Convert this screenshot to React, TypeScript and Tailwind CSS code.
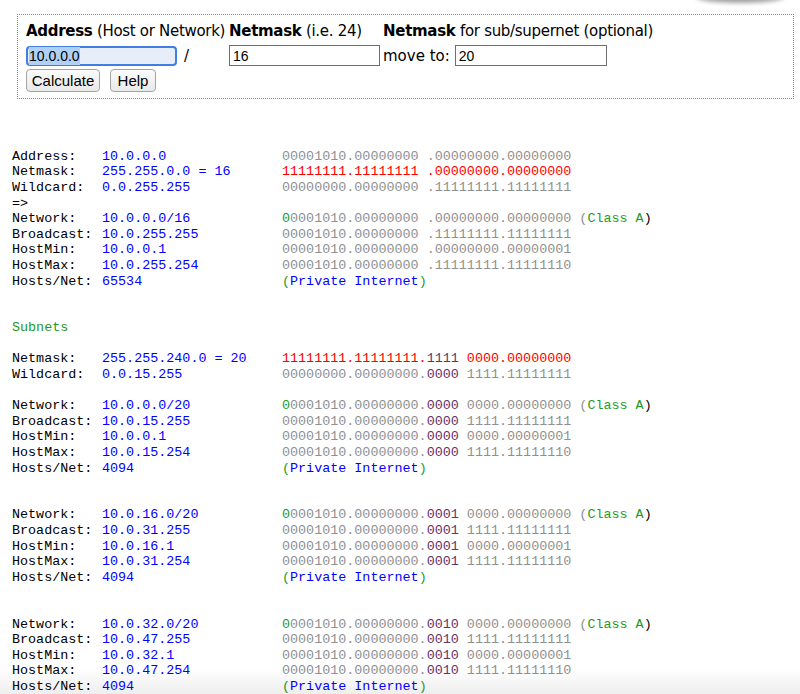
type Seg = [string, string];

const K = "#000000";
const B = "#0000ff";
const G = "#909090";
const R = "#ff0000";
const GR = "#1e9a1e";
const P = "#663366";

interface Row {
  label?: string;
  value?: Seg[];
  bin?: Seg[];
}

const classA: Seg[] = [[" (", G], ["Class A", GR], [")", K]];
const priv: Seg[] = [["(", GR], ["Private Internet", B], [")", GR]];

const subnet = (net: string, bc: string, min: string, max: string, bits: string): Row[] => [
  { label: "Network:", value: [[net, B]], bin: [["0", GR], ["0001010.00000000.", G], [bits, P], [" 0000.00000000", G], ...classA] },
  { label: "Broadcast:", value: [[bc, B]], bin: [["00001010.00000000.", G], [bits, P], [" 1111.11111111", G]] },
  { label: "HostMin:", value: [[min, B]], bin: [["00001010.00000000.", G], [bits, P], [" 0000.00000001", G]] },
  { label: "HostMax:", value: [[max, B]], bin: [["00001010.00000000.", G], [bits, P], [" 1111.11111110", G]] },
  { label: "Hosts/Net:", value: [["4094", B]], bin: priv },
];

const rows: Row[] = [
  { label: "Address:", value: [["10.0.0.0", B]], bin: [["00001010.00000000 .00000000.00000000", G]] },
  { label: "Netmask:", value: [["255.255.0.0 = 16", B]], bin: [["11111111.11111111 .00000000.00000000", R]] },
  { label: "Wildcard:", value: [["0.0.255.255", B]], bin: [["00000000.00000000 .11111111.11111111", G]] },
  { label: "=>" },
  { label: "Network:", value: [["10.0.0.0/16", B]], bin: [["0", GR], ["0001010.00000000 .00000000.00000000", G], ...classA] },
  { label: "Broadcast:", value: [["10.0.255.255", B]], bin: [["00001010.00000000 .11111111.11111111", G]] },
  { label: "HostMin:", value: [["10.0.0.1", B]], bin: [["00001010.00000000 .00000000.00000001", G]] },
  { label: "HostMax:", value: [["10.0.255.254", B]], bin: [["00001010.00000000 .11111111.11111110", G]] },
  { label: "Hosts/Net:", value: [["65534", B]], bin: priv },
  {},
  {},
];

const subnetRows: Row[] = [
  {},
  { label: "Netmask:", value: [["255.255.240.0 = 20", B]], bin: [["11111111.11111111.", R], ["1111", P], [" 0000.00000000", R]] },
  { label: "Wildcard:", value: [["0.0.15.255", B]], bin: [["00000000.00000000.", G], ["0000", P], [" 1111.11111111", G]] },
  {},
  ...subnet("10.0.0.0/20", "10.0.15.255", "10.0.0.1", "10.0.15.254", "0000"),
  {},
  {},
  ...subnet("10.0.16.0/20", "10.0.31.255", "10.0.16.1", "10.0.31.254", "0001"),
  {},
  {},
  ...subnet("10.0.32.0/20", "10.0.47.255", "10.0.32.1", "10.0.47.254", "0010"),
];

const Segs = ({ segs }: { segs?: Seg[] }) => (
  <>
    {segs?.map(([t, c], i) => (
      <span key={i} style={{ color: c }}>
        {t}
      </span>
    ))}
  </>
);

const Line = ({ row }: { row: Row }) => (
  <div className="flex h-[15.6px] items-center whitespace-pre">
    <span className="w-[90px] shrink-0 text-black">{row.label}</span>
    <span className="w-[180px] shrink-0">
      <Segs segs={row.value} />
    </span>
    <span>
      <Segs segs={row.bin} />
    </span>
  </div>
);

const Button = ({ children, w }: { children: string; w: string }) => (
  <button
    className={`${w} h-[23px] rounded-[4px] border border-[#a3a3a3] bg-gradient-to-b from-[#fbfbfb] to-[#e9e9e9] text-[15px] text-black`}
    style={{ fontFamily: '"Liberation Sans", Arial, sans-serif' }}
  >
    {children}
  </button>
);

export default function App() {
  return (
    <div className="relative h-[694px] overflow-hidden bg-[linear-gradient(to_bottom,#ffffff_668px,#eeeeee)]">
      <div className="pointer-events-none absolute right-[16px] top-[-9px] h-[12px] w-[88px] rounded-[50%] bg-[#a0a0a0] blur-[2px]" />

      <form
        className="ml-[17px] mt-[14px] w-[777px] border border-dotted border-[#8a8a8a] pb-[6px] pl-[8px] pt-[6px]"
        style={{ fontFamily: '"DejaVu Sans", Verdana, sans-serif' }}
      >
        <div className="grid grid-cols-[203px_154px_auto] items-center text-[15px] leading-[20px] text-black">
          <div className="tracking-[-0.3px]">
            <b>Address</b> (Host or Network)
          </div>
          <div className="tracking-[-0.3px]">
            <b>Netmask</b> (i.e. 24)
          </div>
          <div className="tracking-[-0.3px]">
            <b>Netmask</b> for sub/supernet (optional)
          </div>

          <div className="mt-[4px] flex items-center">
            <div
              className="flex h-[20px] w-[151px] items-center rounded-[4px] border-2 border-[#3e7fe0] bg-[#e8eef9] pl-[1px] text-[14px] leading-none"
              style={{ fontFamily: '"Liberation Sans", Arial, sans-serif' }}
            >
              <span className="bg-[#b1d0f5] py-[2px]">10.0.0.0</span>
            </div>
            <span className="ml-[7px]">/</span>
          </div>
          <div className="mt-[4px] flex">
            <input
              readOnly
              value="16"
              className="h-[21px] w-[151px] border border-[#6f6f6f] bg-white px-[3px] text-[14px] outline-none"
              style={{ fontFamily: '"Liberation Sans", Arial, sans-serif' }}
            />
          </div>
          <div className="mt-[4px] flex items-center">
            <span className="mr-[5px]">move to:</span>
            <input
              readOnly
              value="20"
              className="h-[21px] w-[152px] border border-[#6f6f6f] bg-white px-[3px] text-[14px] outline-none"
              style={{ fontFamily: '"Liberation Sans", Arial, sans-serif' }}
            />
          </div>

          <div className="col-span-3 mt-[3px] flex gap-[10px]">
            <Button w="w-[74px]">Calculate</Button>
            <Button w="w-[46px]">Help</Button>
          </div>
        </div>
      </form>

      <div
        className="mt-[50px] pl-[12px] text-[13.4px]"
        style={{ fontFamily: '"Liberation Mono", "Courier New", monospace' }}
      >
        {rows.map((r, i) => (
          <Line key={i} row={r} />
        ))}
        <div className="flex h-[15.6px] items-center text-[#1e9a1e]">Subnets</div>
        {subnetRows.map((r, i) => (
          <Line key={`s${i}`} row={r} />
        ))}
      </div>
    </div>
  );
}
